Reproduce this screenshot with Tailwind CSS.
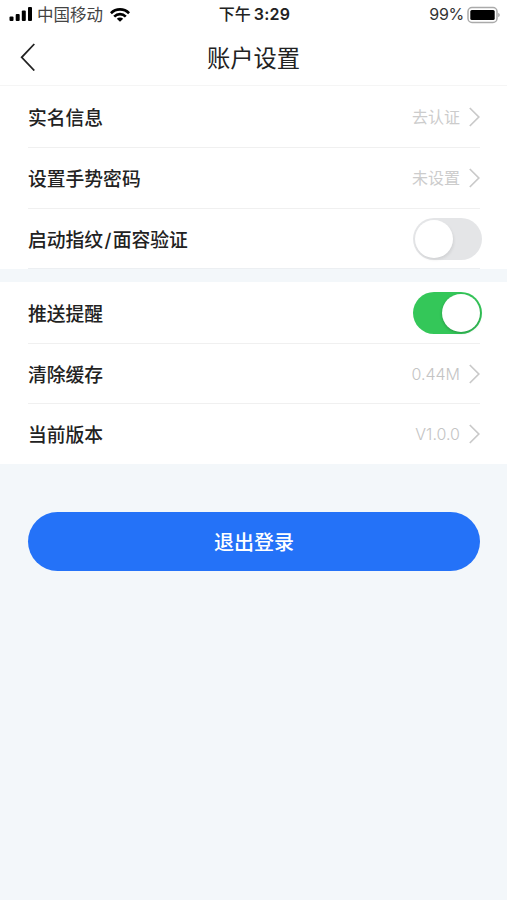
<!DOCTYPE html>
<html lang="zh-CN">
<head>
<meta charset="utf-8">
<title>账户设置</title>
<script src="https://cdn.jsdelivr.net/npm/@tailwindcss/browser@4"></script>
</head>
<body class="bg-[#f3f7fa] font-['Inter','Noto_Sans_CJK_SC',sans-serif] text-[#222]">
<div class="flex h-[900px] w-[507px] flex-col overflow-hidden">
  <header class="h-[86px] shrink-0 border-b border-[#f5f5f5] bg-white">
    <div class="grid h-[29px] grid-cols-3 items-center pr-[7px] pl-[9px] text-[16px] leading-[27px]">
      <div class="flex items-center text-[#444]">
        <svg class="h-[15px] w-[24px]" viewBox="0 0 24 15" fill="#000"><rect x="0.5" y="9.5" width="4" height="4.5" rx="1"/><rect x="6.7" y="7" width="4" height="7" rx="1"/><rect x="12.8" y="3.5" width="4" height="10.5" rx="1"/><rect x="19" y="0" width="4" height="14" rx="1"/></svg>
        <span class="ml-[4px] pt-[2px] text-[16.5px] whitespace-nowrap">中国移动</span>
        <svg class="ml-[7px] h-[14px] w-[20px]" viewBox="0 0 20 14" fill="none" stroke="#000" stroke-width="2.7"><path d="M0.9 5.2C6 .2 14 .2 19.1 5.2"/><path d="M4.2 8.6C7.5 5.4 12.5 5.4 15.8 8.6"/><path d="M10 13.8L6.8 10.7C8.5 9.1 11.5 9.1 13.2 10.7Z" fill="#000" stroke="none"/></svg>
      </div>
      <div class="text-center font-medium text-[#222]">下午<span class="ml-[3px] font-semibold tracking-[0.2px]">3:29</span></div>
      <div class="flex items-center justify-end">
        <span class="text-[16px] tracking-[-0.3px] text-[#333]">99%</span>
        <svg class="ml-[3px] h-[18px] w-[33px]" viewBox="0 0 33 18"><rect x="1" y="1.5" width="29" height="15" rx="4" fill="#fff" stroke="#aaa" stroke-width="1.5"/><rect x="3.3" y="4" width="24.4" height="10" rx="1.5" fill="#000"/><path d="M31.3 6.8V11.2Q32.7 10.5 32.7 9T31.3 6.8Z" fill="#999"/></svg>
      </div>
    </div>
    <div class="grid h-[56px] grid-cols-[1fr_auto_1fr] items-center px-[20px]">
      <svg class="h-[28px] w-[16px]" viewBox="0 0 16 28" fill="none" stroke="#222" stroke-width="1.8"><path d="M14.3 1L1.7 14.3L14.3 27.5"/></svg>
      <h1 class="pt-[3px] text-[23.3px] leading-[53px]">账户设置</h1>
    </div>
  </header>

  <main>
    <section class="bg-white pr-[27px] pl-[28px] text-[18.8px] font-medium">
      <div class="flex h-[62px] items-center justify-between border-b border-[#f0f0f0]">
        <span class="pt-[5px]">实名信息</span>
        <div class="flex items-center gap-[9px] text-[16px] font-normal text-[#ccc]"><span>去认证</span><svg class="h-[20px] w-[11px]" viewBox="0 0 11 20" fill="none" stroke="#c9c9c9" stroke-width="1.7"><path d="M.8 1L9.8 10L.8 19"/></svg></div>
      </div>
      <div class="flex h-[61px] items-center justify-between border-b border-[#f0f0f0]">
        <span class="pt-[5px]">设置手势密码</span>
        <div class="flex items-center gap-[9px] text-[16px] font-normal text-[#ccc]"><span>未设置</span><svg class="h-[20px] w-[11px]" viewBox="0 0 11 20" fill="none" stroke="#c9c9c9" stroke-width="1.7"><path d="M.8 1L9.8 10L.8 19"/></svg></div>
      </div>
      <div class="flex h-[60px] items-center justify-between border-b border-[#eceff2]">
        <span class="pt-[5px]">启动指纹<span class="px-[1.3px]">/</span>面容验证</span>
        <div class="-mr-[2px] flex h-[42px] w-[69px] items-center rounded-full bg-[#e4e5e7] pl-[2px]"><div class="size-[38px] rounded-full bg-white shadow-[1px_2px_3px_rgba(0,0,0,0.08)]"></div></div>
      </div>
    </section>
    <section class="mt-[13px] bg-white pr-[27px] pl-[28px] text-[18.8px] font-medium">
      <div class="flex h-[62px] items-center justify-between border-b border-[#f0f0f0]">
        <span class="pt-[5px]">推送提醒</span>
        <div class="-mr-[2px] flex h-[42px] w-[69px] items-center justify-end rounded-full bg-[#34c759] pr-[2px]"><div class="size-[38px] rounded-full bg-white shadow-[0_1px_3px_rgba(0,0,0,0.25)]"></div></div>
      </div>
      <div class="flex h-[60px] items-center justify-between border-b border-[#f0f0f0]">
        <span class="pt-[5px]">清除缓存</span>
        <div class="flex items-center gap-[9px] text-[16px] font-normal text-[#c4c4c4]"><span class="font-light">0.44M</span><svg class="h-[20px] w-[11px]" viewBox="0 0 11 20" fill="none" stroke="#c9c9c9" stroke-width="1.7"><path d="M.8 1L9.8 10L.8 19"/></svg></div>
      </div>
      <div class="flex h-[60px] items-center justify-between">
        <span class="pt-[5px]">当前版本</span>
        <div class="flex items-center gap-[9px] text-[16px] font-normal text-[#c4c4c4]"><span class="font-light">V1.0.0</span><svg class="h-[20px] w-[11px]" viewBox="0 0 11 20" fill="none" stroke="#c9c9c9" stroke-width="1.7"><path d="M.8 1L9.8 10L.8 19"/></svg></div>
      </div>
    </section>
    <div class="px-[28px] pt-[48px]">
      <button class="h-[59px] w-[452px] rounded-full bg-[#2472f8] pt-[3px] text-[20px] font-medium text-white">退出登录</button>
    </div>
  </main>
</div>
</body>
</html>
